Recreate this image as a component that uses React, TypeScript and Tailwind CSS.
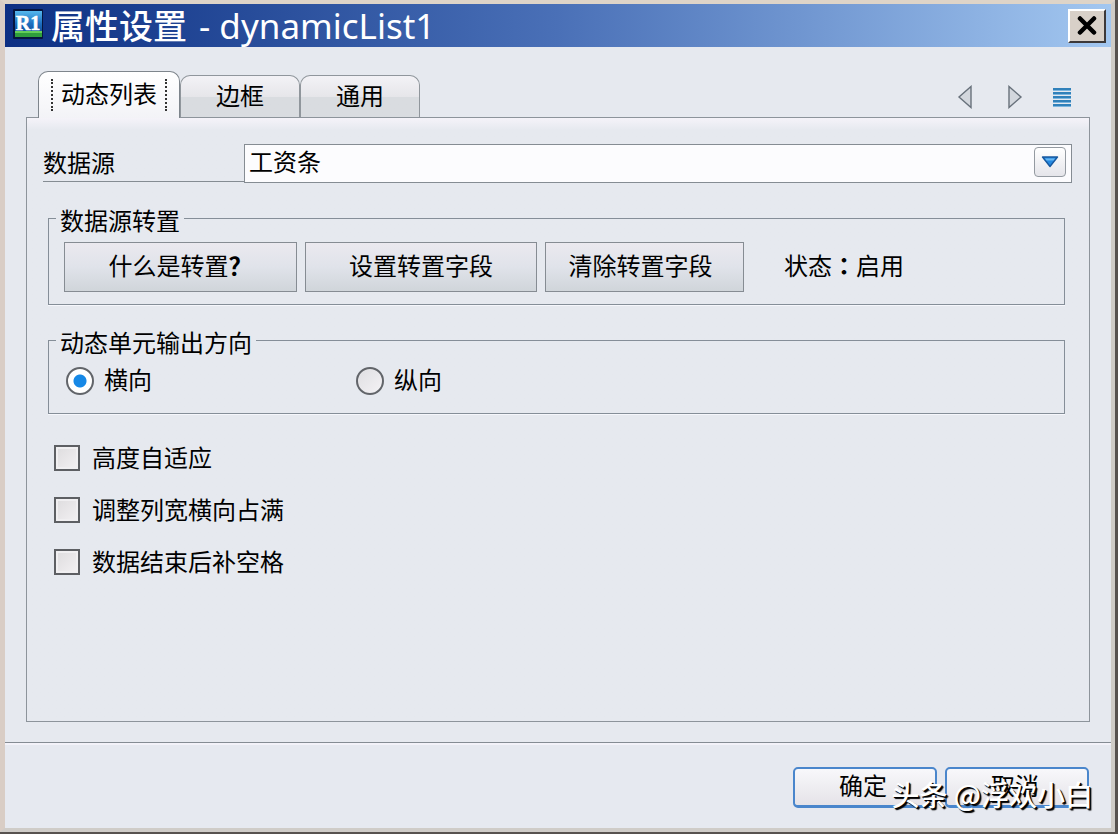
import { useState } from "react";
import type { ReactNode } from "react";

const TABS = ["动态列表", "边框", "通用"];
const OPTIONS = ["高度自适应", "调整列宽横向占满", "数据结束后补空格"];

function AppIcon() {
  return (
    <svg width="30" height="30" viewBox="0 0 30 30" aria-hidden="true" className="-mt-1 shrink-0">
      <defs>
        <linearGradient id="sky" x1="0" y1="0" x2="0" y2="1">
          <stop offset="0" stopColor="#55b8ee" />
          <stop offset="0.6" stopColor="#1d6fc0" />
          <stop offset="1" stopColor="#124f9a" />
        </linearGradient>
      </defs>
      <rect width="30" height="30" rx="1" fill="#06163f" />
      <rect x="2" y="2" width="27" height="21" fill="url(#sky)" />
      <rect x="2" y="22" width="27" height="6" fill="#2f9e3c" />
      <rect x="2" y="22" width="27" height="2" fill="#63cf58" />
      <text x="15" y="21" textAnchor="middle" fontFamily="Liberation Serif, serif" fontWeight="bold" fontSize="20" fill="#fff" stroke="#fff" strokeWidth="0.6">
        R1
      </text>
    </svg>
  );
}

function Group({ title, className, children }: { title: string; className: string; children: ReactNode }) {
  return (
    <fieldset className="mr-2 ml-[5px] min-w-0 border border-[#858e98] px-[15px] shadow-[0_1px_0_#f6f7fc]">
      <legend className="-ml-2 px-1 pt-1 leading-6">{title}</legend>
      <div className={className}>{children}</div>
    </fieldset>
  );
}

function PushButton({ className, children }: { className: string; children: ReactNode }) {
  return (
    <button
      type="button"
      className={`${className} h-[50px] border border-[#868c93] bg-linear-to-b from-[#ebe9ef] via-[#e0e3ea] to-[#d0d5da] pb-1`}
    >
      {children}
    </button>
  );
}

function DialogButton({ children }: { children: ReactNode }) {
  return (
    <button
      type="button"
      className="h-[41px] w-36 rounded-[5px] border-2 border-b-[3px] border-[#4a86cc] bg-linear-to-b from-[#f8f8fb] to-[#e5e3e8] pr-1 pb-1 leading-6"
    >
      {children}
    </button>
  );
}

export default function App() {
  const [tab, setTab] = useState(0);

  return (
    <div className="flex min-h-screen flex-col border-r-[3px] border-b-2 border-[#57524f] bg-[#e6e9ef] font-['Noto_Sans_CJK_SC',sans-serif] text-[24px] text-black">
      <div className="flex flex-1 flex-col border-t-4 border-r-4 border-b-4 border-l-[5px] border-t-[#ded4c8] border-r-[#cfccc7] border-b-[#cfccc8] border-l-[#d9cdc5]">
        <header className="flex h-[43px] items-center bg-linear-to-r from-[#0d2f83] via-[#4a70b7] to-[#a3c7f0] pr-[5px] pl-2">
          <AppIcon />
          <h1 className="ml-2 flex flex-1 items-center gap-3 font-['Noto_Sans','Noto_Sans_CJK_SC',sans-serif] text-[34px] leading-10 text-white">
            <span className="font-medium">属性设置</span>
            <span className="text-[35px]">- dynamicList1</span>
          </h1>
          <button
            type="button"
            aria-label="关闭"
            className="flex h-[34px] w-[38px] items-center justify-center border-2 border-t-white border-r-[#3c3838] border-b-[#3c3838] border-l-white bg-[#d8d0c8]"
          >
            <svg width="20" height="20" viewBox="0 0 20 20" aria-hidden="true">
              <path d="M3 2.500 17 16.500M17 2.500 3 16.500" stroke="#000" strokeWidth="4.500" strokeLinecap="round" />
            </svg>
          </button>
        </header>

        <main className="flex flex-1 flex-col px-[21px] pt-6 pb-5">
          <div className="flex items-end pr-[19px] pl-3">
            <div role="tablist" className="z-10 -mb-px flex items-end">
              {TABS.map((name, i) => (
                <button
                  key={name}
                  type="button"
                  role="tab"
                  aria-selected={tab === i}
                  onClick={() => setTab(i)}
                  className={
                    tab === i
                      ? "flex h-[47px] w-[142px] items-center justify-center rounded-t-[10px] border border-b-0 border-[#7e858c] bg-linear-to-b from-white to-[#f3f3f7]"
                      : "mb-px flex h-[42px] w-[120px] items-center justify-center rounded-t-[10px] border border-b-0 border-[#90969c] bg-linear-to-b from-[#f3f2f6] from-0% via-[#e6e6ea] via-50% to-[#d9dce0] to-50% pb-1"
                  }
                >
                  <span
                    className={
                      tab === i
                        ? "flex h-8 items-center border-x-2 border-dotted border-[#333] px-2 pb-1 leading-8"
                        : "leading-8"
                    }
                  >
                    {name}
                  </span>
                </button>
              ))}
            </div>
            <div className="mb-2 ml-auto flex items-center gap-[34px]">
              <button type="button" aria-label="上一个">
                <svg width="16" height="24" viewBox="0 0 16 24" aria-hidden="true">
                  <path d="M14 1.5V22.5L2 12Z" fill="#d3d7dd" stroke="#68717b" strokeWidth="1.4" />
                </svg>
              </button>
              <button type="button" aria-label="下一个">
                <svg width="16" height="24" viewBox="0 0 16 24" aria-hidden="true">
                  <path d="M2 1.5V22.5L14 12Z" fill="#d3d7dd" stroke="#68717b" strokeWidth="1.4" />
                </svg>
              </button>
              <button type="button" aria-label="列表" className="-ml-1">
                <svg width="18" height="20" viewBox="0 0 18 20" aria-hidden="true">
                  <path d="M0 3H18M0 7H18M0 11H18M0 15H18M0 19H18" stroke="#7db6df" strokeWidth="2" />
                  <path d="M0 2H18M0 6H18M0 10H18M0 14H18M0 18H18" stroke="#3181ba" strokeWidth="2" />
                </svg>
              </button>
            </div>
          </div>

          <section className="flex-1 border border-[#8d949b] bg-linear-to-b from-[#f5f3f9] from-0% to-[#e6e9ef] to-2% px-4 pt-[25px] pb-6">
            <div className="mr-px flex h-[39px] items-stretch">
              <label htmlFor="source" className="w-[201px] border-b border-[#858c93] leading-[38px]">
                数据源
              </label>
              <div className="relative flex-1">
                <select
                  id="source"
                  className="size-full appearance-none border border-[#858c93] bg-[#fcfcfe] pr-10 pb-1 pl-1 leading-8"
                >
                  <option>工资条</option>
                </select>
                <span className="pointer-events-none absolute top-1 right-1.5 flex h-[30px] w-8 items-center justify-center rounded-[4px] border border-[#949aa1] bg-linear-to-b from-white to-[#e5e5ea]">
                  <svg width="18" height="12" viewBox="0 0 18 12" aria-hidden="true">
                    <path d="M1.5 1H16.5L9 10.5Z" fill="#2589e0" stroke="#17589f" strokeWidth="1.4" strokeLinejoin="round" />
                    <path d="M4 2.5H14L12.5 4.5H5.5Z" fill="#69b7f2" />
                  </svg>
                </span>
              </div>
            </div>

            <div className="mt-[22px]">
              <Group title="数据源转置" className="flex flex-wrap items-center gap-2 pt-[10px] pb-3">
                <PushButton className="w-[233px]">
                  什么是转置<b>？</b>
                </PushButton>
                <PushButton className="w-[232px]">设置转置字段</PushButton>
                <PushButton className="w-[199px] pr-2">清除转置字段</PushButton>
                <span className="ml-8 pb-1">
                  状态<span className="font-['Noto_Sans_CJK_TC'] font-bold">：</span>启用
                </span>
              </Group>
            </div>

            <div className="mt-[21px]">
              <Group title="动态单元输出方向" className="flex pt-[13px] pb-[18px]">
                {["横向", "纵向"].map((name, i) => (
                  <label key={name} className="flex h-7 w-[290px] items-center gap-[10px] pl-0.5">
                    <input
                      type="radio"
                      name="direction"
                      defaultChecked={i === 0}
                      className="size-7 appearance-none rounded-full border-2 border-[#62656a] bg-linear-to-br from-[#dfdfe2] to-[#f4f2f5] checked:bg-[radial-gradient(circle,#1688e6_0_6px,#fff_7px)]"
                    />
                    <span className="pb-1 leading-6">{name}</span>
                  </label>
                ))}
              </Group>
            </div>

            <div className="mt-[18px] flex flex-col items-start pl-[11px]">
              {OPTIONS.map((name) => (
                <label key={name} className="flex h-[52px] items-center gap-3">
                  <input
                    type="checkbox"
                    className="size-[26px] appearance-none border-2 border-[#5d5f63] bg-linear-to-br from-[#dddcde] to-[#f3f1f3] shadow-[inset_0_0_0_2px_#f0eff1] checked:bg-[#1688e6] checked:bg-none"
                  />
                  <span className="pb-0.5 leading-6">{name}</span>
                </label>
              ))}
            </div>
          </section>
        </main>

        <footer className="relative flex h-[86px] items-start justify-end gap-2 border-t border-[#858c93] bg-[#e6e9f0] pt-6 pr-[22px] shadow-[inset_0_2px_0_#f3f2f9]">
          <DialogButton>确定</DialogButton>
          <DialogButton>取消</DialogButton>
          <p className="pointer-events-none absolute right-[18px] bottom-[14px] text-[28px] leading-10 font-medium whitespace-nowrap text-white [text-shadow:2px_2px_1px_#000,1px_1px_0_#000]">
            头条 @浮欢小白
          </p>
        </footer>
      </div>
    </div>
  );
}
